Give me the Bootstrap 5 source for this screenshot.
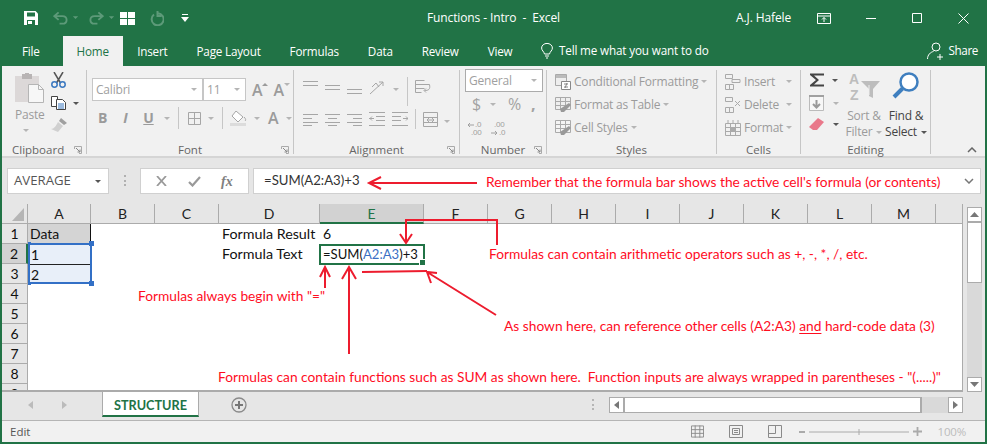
<!DOCTYPE html>
<html lang="en"><head><meta charset="utf-8"><title>Functions - Intro - Excel</title>
<link href="https://cdn.jsdelivr.net/npm/bootstrap@5.3.0/dist/css/bootstrap.min.css" rel="stylesheet">
<style>
html,body{margin:0;height:444px;overflow:hidden;background:#217346}
body{font-family:"Open Sans","Noto Sans",sans-serif;font-size:12px;color:#444}
svg{display:block;flex:none}
.xwin{position:relative;width:987px;height:444px;padding:0 2px 2px 2px;background:#217346;overflow:hidden}
.xtitle{height:36px;color:#fff;font-size:12px;margin:0 -2px}
.xqat{width:427px;padding-left:24px;flex:none}
.xcap{width:309px;white-space:pre;flex:none;letter-spacing:-.12px}
.xuser{width:81px;flex:none;letter-spacing:-.1px}
.xm35{margin-left:35px}.xm36{margin-left:36px}
.xtabs{height:30px;margin:0 -2px;color:#fff}
.xtabs .nav-link{color:#fff;padding:0;height:30px;line-height:30px;font-size:11.7px;letter-spacing:-.2px}
.xtab{padding:0 14.5px!important}
.xfile{padding:0 23px 0 22px!important}
.xhome{background:#f1f1f1;color:#217346!important;width:60px;text-align:center;padding:0!important}
.xtell{margin-left:14px;gap:6px;letter-spacing:-.15px;font-size:11.7px}
.xshare{margin-left:auto;gap:4px;padding-right:9px;font-size:11.7px;letter-spacing:-.4px}
.xribbon{height:92px;background:#f1f1f1;border-bottom:2px solid #d5d5d5;color:#9b9b9b;position:relative;font-size:12px;letter-spacing:-.2px}
.xrg{display:flex;flex-direction:column;height:84px;margin-top:4px;border-right:1px solid #c6c6c6;flex:none;position:relative}
.xrb{height:74px;flex:none}
.xlab{height:12px;flex:none;line-height:12px;text-align:center;color:#666;font-size:11.5px;position:relative;letter-spacing:0}
.xlaunch{position:absolute;right:4px;bottom:2px}
.g1{width:85px}.g2{width:207px}.g3{width:166px}.g4{width:87px}.g5{width:170px}.g6{width:84px}.g7{width:130px}
.g1 .xlab{text-align:left;padding-left:10px}
.xpaste{width:49px;padding:3px 0 0 13px;text-align:left;line-height:15px;gap:4px}
.xpaste .xcaret{margin-top:3px}
.xrow{display:flex;align-items:center}
.xcol1{padding-top:2px;gap:8px}
.xcombo{background:#fff;border:1px solid #c6c6c6;height:23px;display:flex;align-items:center;justify-content:space-between;padding:0 5px 0 3px;color:#a0a0a0;font-size:12px}
.c-font{width:111px;margin-left:5px}.c-size{width:43px}
.c-num{width:78px;height:23px;border-color:#ababab;margin:-1px 0 0 5px}
.xr2{margin-top:6px;height:22px}
.xt-a{font-size:16px;font-weight:600;color:#9b9b9b;line-height:1}
.xb{font-weight:700;font-size:14px;color:#9b9b9b;width:23px;text-align:center;line-height:1}
.xcaret{width:0;height:0;border-left:3px solid transparent;border-right:3px solid transparent;border-top:3px solid #b5b5b5;flex:none}
.xcaret.dk{border-top-color:#555}
.xcaret.xtop{align-self:flex-start;margin-top:5px}
.xcaret.xup{border-top:0;border-bottom:3px solid #9b9b9b}
.xvs{width:1px;height:22px;background:#c6c6c6;flex:none}
.xs1{margin-left:9px}.xs2{margin-left:7px}.xs3{margin-left:8px}.xs5{margin-left:5px}.xs6{margin-left:6px}.xs0{margin-left:4px}.xs16{margin-left:16px}.xs15{margin-left:15px}
.xs12{margin-left:12px}.xs10{margin-left:10px}.xs25{margin-left:25px}.xs17{margin-left:17px}
.xa-body{padding:10px 0 0 9px}
.xa-r{height:32px;flex:none;align-items:flex-start}
.xa-r svg+svg{margin-left:7px}
.xa-r .xvs{height:29px;margin-top:-3px}
.xa-r+.xa-r .xvs{height:20px;margin-top:-3px}
.xn-r{height:24px;font-size:16px;color:#a3a3a3;padding-left:12px}
.xn-r2{padding-left:8px;gap:8px}
.xs-r{height:23px;padding-left:8px;gap:3px;white-space:nowrap;font-size:12px}
.xcw{width:39px}
.xe-body{display:flex;padding:2px 0 0 8px}
.xe-col{width:30px;gap:7px}
.xe-btn{width:42px;line-height:16px;text-align:center;align-items:center;white-space:nowrap}
.xe-find{color:#444}
.xe-btn .xgap{margin-top:9px}
.xsortico{margin-bottom:-4px}
.xcollapse{position:absolute;right:8px;bottom:3px}
.xfbar{height:46px;background:#e6e6e6;margin:0;padding:10px 0 0 5px;align-items:flex-start}
.xbox{background:#fff;border:1px solid #d0d0d0;height:26px;display:flex;align-items:center}
.xname{width:102px;padding:0 7px 0 6px;justify-content:space-between;color:#555;font-size:13.2px}
.xdots{width:1px;height:11px;border-left:2px dotted #b0b0b0;margin:7px 14px 0 15px}
.xfx{width:109px;justify-content:space-around;padding:0 5px;margin-right:4px}
.xfxt{font-family:"Liberation Serif",serif;font-style:italic;font-weight:700;font-size:14px;color:#808080}
.xfi{width:728px;padding:0 6px 0 10px;font-family:Lato,"Noto Sans",sans-serif;font-size:13.2px;color:#333;justify-content:space-between}
.xmain{height:188px;background:#e6e6e6}
.xsheet{display:grid;width:961px;height:188px;flex:none;overflow:hidden;grid-template-columns:26px 63px 64px 64px 101px 104px repeat(8,64px) 27px;grid-template-rows:20px repeat(9,20px);background:#fff;font-family:Lato,"Noto Sans",sans-serif;font-size:14px;color:#111;border-right:1px solid #ababab;border-bottom:2px solid #ababab}
.xch{background:#e6e6e6;border-bottom:1px solid #ababab;border-right:1px solid #ababab;text-align:center;line-height:19px;color:#222}
.xch.ch-last{border-right:0}
.xcor{background:#e6e6e6;border-bottom:1px solid #ababab;border-right:1px solid #ababab;display:flex;align-items:flex-end;justify-content:flex-end;padding:0 3px 2px 0}
.xch.xact{background:#d2d2d2;color:#217346;border-bottom:2px solid #217346}
.xrh{background:#e6e6e6;border-bottom:1px solid #ababab;border-right:1px solid #ababab;text-align:center;line-height:19px;grid-column:1}
.xrh.xsel{background:#d2d2d2;border-right:2px solid #217346}
.xcell{padding-left:3px;line-height:20px;white-space:nowrap}
.xa1{grid-column:2;grid-row:2;background:#d4d4d4;border-right:1px solid #111;padding-left:2px}
.xrange{grid-column:2;grid-row:3/span 2;background:#e8eff9;border:2px solid #3370c6;margin:-1px -1px 0 0;position:relative;display:flex;flex-direction:column;z-index:1}
.xrange div{height:19px;padding-left:1px;line-height:19px}
.xrange div:first-child{height:20px;border-bottom:1px solid #222}
.xhandle{position:absolute;background:#3370c6;width:5px;height:5px}
.xh1{right:-4px;top:-4px}.xh2{right:-4px;bottom:-4px}.xh3{left:-2px;top:-3px;width:3px;height:3px}.xh4{left:-2px;bottom:-3px;width:3px;height:3px}
.xd1{grid-column:5;grid-row:2;font-size:14.3px}.xd2{grid-column:5;grid-row:3;font-size:14.3px}
.xe1{grid-column:6;grid-row:2}
.xe2{grid-column:6;grid-row:3;border:2px solid #217346;line-height:17px;padding-left:2px;position:relative;margin:0 -1px -1px -1px;background:#fff;z-index:1;font-size:13.1px}
.xfill{position:absolute;right:-3px;bottom:-3px;width:5px;height:5px;background:#217346;border:1px solid #fff;box-sizing:content-box}
.xblue{color:#3a6fc4}
.xvsb{width:15px;margin:3px 0 0 4px;height:185px;flex:none;display:flex;flex-direction:column}
.xsbtn{background:#fff;border:1px solid #ababab;display:flex;align-items:center;justify-content:center;flex:none}
.xvsb .xsbtn{height:15px}
.xvtrack{flex:1;background:#d9d9d9}
.xvthumb{background:#fff;border:1px solid #ababab;height:61px}
.xtabbar{height:28px;background:#e6e6e6;position:relative}
.xsheet-tab{width:97px;height:25px;background:#fff;border:solid #ababab;border-width:0 1px;border-bottom:2px solid #217346;color:#217346;font-weight:700;font-family:Lato,sans-serif;font-size:12.7px;text-align:center;line-height:26px;flex:none}
.xnav{width:100px;padding-left:26px;gap:20px;flex:none;height:25px}
.xplus{margin-left:32px;padding-top:5px}
.xsplit{margin-left:345px;height:11px;width:2px;border-left:2px dotted #b5b5b5;margin-top:7px}
.xhsb{margin-left:15px;height:16px;display:flex;width:354px;margin-top:5px}
.xhsb .xsbtn{width:15px;height:16px}
.xhtrack{width:299px;background:#fff;border:1px solid #ababab;border-width:1px 2px 1px 1px}
.xhgrey{width:26px;background:#d9d9d9}
.xstatus{height:22px;background:#f1f1f1;border-top:1px solid #b5b5b5;font-size:11.5px;color:#555;padding-left:8px}
.xsicons{margin-left:auto;padding-right:19px}
.xpct{color:#bcbcbc;font-size:11.5px;letter-spacing:-.2px}
.xov{position:absolute;left:0;top:0;z-index:5;pointer-events:none}
.xnote{position:absolute;z-index:6;color:#ff0d1f;font-family:Lato,"Noto Sans",sans-serif;font-size:13.75px;white-space:pre;line-height:18px}
.n1{left:486px;top:173px}.n2{left:489px;top:245px}.n3{left:138px;top:287px}.n4{left:504px;top:317px}.n5{left:218px;top:368px}
.xnote u{text-underline-offset:2px}
</style></head>
<body>
<svg width="0" height="0" class="position-absolute">
<defs>
<symbol id="al" viewBox="0 0 15 15"><path d="M0 1.500h15M0 5.500h15" stroke="#a6a6a6" fill="none"/></symbol>
<symbol id="am" viewBox="0 0 15 15"><path d="M0 5.500h15M0 9.500h15" stroke="#a6a6a6" fill="none"/></symbol>
<symbol id="ab" viewBox="0 0 15 15"><path d="M0 9.500h15M0 13.500h15" stroke="#a6a6a6" fill="none"/></symbol>
<symbol id="jl" viewBox="0 0 15 15"><path d="M0 2.500h15M0 6.500h9M0 10.500h15M0 13.500h9" stroke="#a6a6a6" fill="none"/></symbol>
<symbol id="jc" viewBox="0 0 15 15"><path d="M0 2.500h15M3 6.500h9M0 10.500h15M3 13.500h9" stroke="#a6a6a6" fill="none"/></symbol>
<symbol id="jr" viewBox="0 0 15 15"><path d="M0 2.500h15M6 6.500h9M0 10.500h15M6 13.500h9" stroke="#a6a6a6" fill="none"/></symbol>
<symbol id="launch" viewBox="0 0 8 8"><path d="M.5 3V.5h7v7H5" fill="none" stroke="#aaa"/><path d="M2 2l4 4M6 3.500V6H3.500" fill="none" stroke="#888"/></symbol>
</defs></svg>
<div class="xwin d-flex flex-column">

<!-- title bar -->
<div class="xtitle d-flex align-items-center">
 <div class="xqat d-flex align-items-center">
  <svg width="14" height="14" viewBox="0 0 14 14"><path d="M0 0h11.500L14 2.500V14H0z" fill="#fff"/><path d="M3 1.500h8v4H3z" fill="#217346"/><path d="M3 9h8v5H3z" fill="#217346"/><path d="M4 10h4v3H4z" fill="#fff"/></svg>
  <svg class="xs15" width="15" height="14" viewBox="0 0 16 14"><path d="M6 1L1.500 5 6 9M2 5h8c6 0 6 8 0 8H7" fill="none" stroke="#5d9a79" stroke-width="2"/></svg>
  <svg class="xs0" width="7" height="4" viewBox="0 0 8 4"><path d="M1 0h6L4 3z" fill="#5d9a79"/></svg>
  <svg class="xs10" width="15" height="14" viewBox="0 0 16 14"><path d="M10 1l4.500 4L10 9M14 5H6c-6 0-6 8 0 8h3" fill="none" stroke="#5d9a79" stroke-width="2"/></svg>
  <svg class="xs0" width="7" height="4" viewBox="0 0 8 4"><path d="M1 0h6L4 3z" fill="#5d9a79"/></svg>
  <svg class="xs5" width="15" height="13" viewBox="0 0 15 13"><path d="M0 0h7v6H0zM8 0h7v6H8zM0 7h7v6H0zM8 7h7v6H8z" fill="#fff"/></svg>
  <svg class="xs15" width="14" height="15" viewBox="0 0 14 15"><path d="M4 3.500a6 6 0 1 0 4-1.200M7.500 0v5h4" fill="none" stroke="#5d9a79" stroke-width="2"/></svg>
  <svg class="xs17" width="8" height="8" viewBox="0 0 8 8"><path d="M1 0h6v1H1zM0 3h8L4 8z" fill="#fff"/></svg>
 </div>
 <div class="xcap">Functions - Intro  -  Excel</div>
 <div class="xuser">A.J. Hafele</div>
 <svg width="14" height="11" viewBox="0 0 14 11"><path d="M.5.500h13v10H.5zM0 3h14M7 9V4.500M5 6.500l2-2 2 2" fill="none" stroke="#fff"/></svg>
 <svg class="xm35" width="10" height="1" viewBox="0 0 10 1"><path d="M0 .500h10" stroke="#fff"/></svg>
 <svg class="xm36" width="10" height="10" viewBox="0 0 10 10"><path d="M.5.500h9v9h-9z" fill="none" stroke="#fff"/></svg>
 <svg class="xm36" width="11" height="11" viewBox="0 0 11 11"><path d="M.5.500l10 10M10.500.500l-10 10" stroke="#fff"/></svg>
</div>

<!-- tabs -->
<ul class="nav xtabs flex-nowrap">
 <li class="nav-item"><a class="nav-link xfile" href="#">File</a></li>
 <li class="nav-item"><a class="nav-link xhome" href="#">Home</a></li>
 <li class="nav-item"><a class="nav-link xtab" href="#">Insert</a></li>
 <li class="nav-item"><a class="nav-link xtab" href="#">Page Layout</a></li>
 <li class="nav-item"><a class="nav-link xtab" href="#">Formulas</a></li>
 <li class="nav-item"><a class="nav-link xtab" href="#">Data</a></li>
 <li class="nav-item"><a class="nav-link xtab" href="#">Review</a></li>
 <li class="nav-item"><a class="nav-link xtab" href="#">View</a></li>
 <li class="nav-item d-flex align-items-center xtell">
  <svg width="12" height="16" viewBox="0 0 12 16"><path d="M3.500 11C3 8.500.6 7.500.6 5a5.400 4.600 0 0 1 10.800 0c0 2.500-2.400 3.500-2.900 6zM4 13h4M5 15h2" fill="none" stroke="#fff"/></svg>
  <span>Tell me what you want to do</span></li>
 <li class="nav-item d-flex align-items-center xshare">
  <svg width="18" height="18" viewBox="0 0 18 18"><circle cx="9" cy="5" r="4" fill="none" stroke="#fff"/><path d="M.5 17c0-4 3-7 6-7.500M13 12v6M10 15h6" fill="none" stroke="#fff"/></svg>
  <span>Share</span></li>
</ul>

<!-- ribbon -->
<div class="xribbon d-flex">
 <div class="xrg g1">
  <div class="xrb d-flex">
   <div class="xpaste d-flex flex-column">
    <svg width="30" height="30" viewBox="0 0 30 30"><path d="M0 3h24v26H0z" fill="#dcd8d8"/><path d="M7 1h10v5H7z" fill="#b8b4b4"/><path d="M10 0h4v2h-4z" fill="#b8b4b4"/><path d="M13.500 11.500h10l5 5v13h-15z" fill="#f7f7f7" stroke="#b5b5b5"/><path d="M23.500 11.500v5h5" fill="none" stroke="#b5b5b5"/></svg>
    <span>Paste</span>
    <span class="xcaret ms-2"></span>
   </div>
   <div class="d-flex flex-column xcol1">
    <svg width="15" height="16" viewBox="0 0 15 16"><path d="M3 0l6.500 11M12 0L5.500 11" stroke="#555" stroke-width="1.500" fill="none"/><circle cx="3.500" cy="12.500" r="2.700" fill="none" stroke="#3a78c0" stroke-width="1.500"/><circle cx="11.500" cy="12.500" r="2.700" fill="none" stroke="#3a78c0" stroke-width="1.500"/></svg>
    <div class="xrow"><svg width="15" height="14" viewBox="0 0 15 14"><path d="M.5.500h6v10h-6z" fill="#fff" stroke="#444"/><path d="M5.500 3.500h6l3 3v7h-9z" fill="#fff" stroke="#444"/><path d="M7 8h6M7 10h6M7 12h6" stroke="#3a78c0"/></svg><span class="xcaret dk xs2"></span></div>
    <svg width="16" height="15" viewBox="0 0 16 15"><path d="M10 0l6 5-3 2-5-4z" fill="#a0a0a0"/><path d="M7 4l5 4-5 6-7-3c3 0 5-3 7-7z" fill="#d0d0d0"/></svg>
   </div>
  </div>
  <div class="xlab">Clipboard<svg class="xlaunch" width="8" height="8"><use href="#launch"/></svg></div>
 </div>

 <div class="xrg g2">
  <div class="xrb">
   <div class="xrow mt-1 pt-1">
    <div class="xcombo c-font"><span>Calibri</span><span class="xcaret"></span></div>
    <div class="xcombo c-size"><span>11</span><span class="xcaret"></span></div>
    <span class="xt-a xs6">A</span><span class="xcaret xup xtop"></span>
    <span class="xt-a xs5">A</span><span class="xcaret xtop"></span>
   </div>
   <div class="xrow xr2">
    <span class="xb xs0">B</span><span class="xb fst-italic">I</span><span class="xb text-decoration-underline">U</span>
    <span class="xcaret xs0"></span><span class="xvs xs3"></span>
    <svg class="xs1" width="13" height="13" viewBox="0 0 13 13"><path d="M.5.500h12v12H.5zM6.500 0v13M0 6.500h13" fill="none" stroke="#a6a6a6"/></svg>
    <span class="xcaret xs2"></span><span class="xvs xs3"></span>
    <svg class="xs2" width="17" height="15" viewBox="0 0 17 15"><path d="M6 0l7 6-5 5-6-6z" fill="#fff" stroke="#a6a6a6"/><path d="M14 6c2 2 2 3 1 4" stroke="#a6a6a6" fill="none"/><path d="M0 12h16v3H0z" fill="#dcdcdc"/></svg>
    <span class="xcaret xs2"></span>
    <span class="xt-a xs3">A</span><span class="xcaret xs3"></span>
   </div>
  </div>
  <div class="xlab">Font<svg class="xlaunch" width="8" height="8"><use href="#launch"/></svg></div>
 </div>

 <div class="xrg g3">
  <div class="xrb xa-body d-flex flex-column">
   <div class="xrow xa-r">
    <svg width="15" height="15"><use href="#al"/></svg><svg width="15" height="15"><use href="#am"/></svg><svg width="15" height="15"><use href="#ab"/></svg>
    <svg class="xs1" width="17" height="15" viewBox="0 0 17 15"><path d="M1 14L14 2M14 2h-4M14 2v4" fill="none" stroke="#a6a6a6"/><path d="M3 7l4-4 3 4" fill="none" stroke="#a6a6a6"/></svg>
    <span class="xcaret xs2 mt-2"></span>
    <span class="xvs xs3"></span>
    <svg class="xs2" width="16" height="16" viewBox="0 0 16 16"><path d="M.5.500h9M.5 4.500h14M.5 8.500h9M.5 12.500h6M.5.500v12" fill="none" stroke="#a6a6a6"/><path d="M14.500 4.500c1 5-1 6-5 6M11 8.500l-2 2 2 2" fill="none" stroke="#a6a6a6"/></svg>
   </div>
   <div class="xrow xa-r">
    <svg width="15" height="15"><use href="#jl"/></svg><svg width="15" height="15"><use href="#jc"/></svg><svg width="15" height="15"><use href="#jr"/></svg>
    <svg class="xs1" width="16" height="15" viewBox="0 0 16 15"><path d="M0 .500h16M7 4.500h9M7 8.500h9M0 13.500h16M5 6.500H0M3 4.500l-2 2 2 2" fill="none" stroke="#a6a6a6"/></svg>
    <svg class="xs5" width="16" height="15" viewBox="0 0 16 15"><path d="M0 .500h16M0 4.500h9M0 8.500h9M0 13.500h16M11 6.500h5M14 4.500l2 2-2 2" fill="none" stroke="#a6a6a6"/></svg>
    <span class="xvs xs2"></span>
    <svg class="xs2" width="15" height="15" viewBox="0 0 15 15"><path d="M.5.500h14v14H.5zM0 5.500h15M0 10.500h15M4 8h7M6 6l-2 2 2 2M9 6l2 2-2 2" fill="none" stroke="#a6a6a6"/></svg>
    <span class="xcaret xs6 mt-2"></span>
   </div>
  </div>
  <div class="xlab">Alignment<svg class="xlaunch" width="8" height="8"><use href="#launch"/></svg></div>
 </div>

 <div class="xrg g4">
  <div class="xrb">
   <div class="xcombo c-num"><span>General</span><span class="xcaret"></span></div>
   <div class="xrow xn-r"><span>$</span><span class="xcaret xs1"></span><span class="xs12">%</span><span class="xs10 fw-bold">,</span></div>
   <div class="xrow xn-r xn-r2">
    <svg width="15" height="15" viewBox="0 0 15 15"><text x="7" y="6" font-size="8" fill="#a0a0a0" font-family="Liberation Sans">.0</text><text x="3" y="14" font-size="8" fill="#a0a0a0" font-family="Liberation Sans">.00</text><path d="M0 4h6M2 2L0 4l2 2" fill="none" stroke="#a0a0a0"/></svg>
    <svg width="15" height="15" viewBox="0 0 15 15"><text x="3" y="6" font-size="8" fill="#a0a0a0" font-family="Liberation Sans">.00</text><text x="8" y="14" font-size="8" fill="#a0a0a0" font-family="Liberation Sans">.0</text><path d="M0 12h6M4 10l2 2-2 2" fill="none" stroke="#a0a0a0"/></svg>
   </div>
  </div>
  <div class="xlab">Number<svg class="xlaunch" width="8" height="8"><use href="#launch"/></svg></div>
 </div>

 <div class="xrg g5">
  <div class="xrb">
   <div class="xrow xs-r"><svg width="16" height="16" viewBox="0 0 16 16"><path d="M.5.500h11v11H.5z" fill="#eee" stroke="#aaa"/><path d="M1 1h10v3H1z" fill="#bbb"/><path d="M6.500 7.500h9v8h-9z" fill="#fff" stroke="#888"/><path d="M9 10h4M9 13h4M12 9l-2 5" stroke="#888"/></svg><span>Conditional Formatting</span><span class="xcaret"></span></div>
   <div class="xrow xs-r"><svg width="16" height="16" viewBox="0 0 16 16"><path d="M.5.500h15v12H.5zM0 4.500h16M5.500 0v13M10.500 0v13M0 8.500h16" fill="#eee" stroke="#aaa"/><path d="M14 6l2 2-7 7H6l-1-3z" fill="#999"/></svg><span>Format as Table</span><span class="xcaret"></span></div>
   <div class="xrow xs-r"><svg width="16" height="16" viewBox="0 0 16 16"><path d="M.5.500h15v12H.5zM0 4.500h16M5.500 0v13M10.500 0v13M0 8.500h16" fill="#f4f4f4" stroke="#aaa"/><path d="M14 6l2 2-7 7H6l-1-3z" fill="#999"/></svg><span>Cell Styles</span><span class="xcaret"></span></div>
  </div>
  <div class="xlab">Styles</div>
 </div>

 <div class="xrg g6">
  <div class="xrb">
   <div class="xrow xs-r"><svg width="16" height="16" viewBox="0 0 16 16"><path d="M.5.500h7v4h-7zM.5 10.500h4v5h-4zM4.500 10.500h4v5h-4zM7 5.500h8v3H7z" fill="none" stroke="#aaa"/></svg><span class="xcw">Insert</span><span class="xcaret"></span></div>
   <div class="xrow xs-r"><svg width="16" height="16" viewBox="0 0 16 16"><path d="M.5.500h7v4h-7zM.5 10.500h4v5h-4zM4.500 10.500h4v5h-4zM10 4l5 5M15 4l-5 5" fill="none" stroke="#aaa"/></svg><span class="xcw">Delete</span><span class="xcaret"></span></div>
   <div class="xrow xs-r"><svg width="16" height="16" viewBox="0 0 16 16"><path d="M.5 3.500h15v12H.5zM0 7.500h16M0 11.500h16M5.500 3v13M10.500 3v13M3 0v3M8 0v3M13 0v3" fill="none" stroke="#aaa"/><path d="M6 8h4v3H6z" fill="#aaa"/></svg><span class="xcw">Format</span><span class="xcaret"></span></div>
  </div>
  <div class="xlab">Cells</div>
 </div>

 <div class="xrg g7">
  <div class="xrb xe-body">
   <div class="xe-col d-flex flex-column">
    <div class="xrow"><svg width="16" height="16" viewBox="0 0 16 16"><path d="M1 1.500h14v2H5l5 4.500-5 4.500h10v2H1v-1.500L7 8 1 3z" fill="#444"/></svg><span class="xcaret dk xs2"></span></div>
    <div class="xrow"><svg width="15" height="16" viewBox="0 0 15 16"><path d="M.5.500h14v15H.5z" fill="#f7f7f7" stroke="#bbb"/><path d="M0 0h15v2H0z" fill="#a0a0a0"/><path d="M7.500 5v7M4 9l3.500 3.500L11 9" fill="none" stroke="#999" stroke-width="2"/></svg><span class="xcaret xs1"></span></div>
    <div class="xrow"><svg width="15" height="13" viewBox="0 0 15 13"><path d="M9 0l6 4-7 8H4l-4-3z" fill="#e9788a"/></svg><span class="xcaret dk xs1"></span></div>
   </div>
   <div class="xe-btn d-flex flex-column xs0">
    <svg class="xsortico" width="31" height="31" viewBox="0 0 31 31"><text x="0" y="12" font-size="14" font-weight="700" fill="#bdbdbd" font-family="Liberation Sans">A</text><text x="1" y="28" font-size="14" font-weight="700" fill="#bdbdbd" font-family="Liberation Sans">Z</text><path d="M12 9h19l-7 8v9l-4-2v-7z" fill="#bdbdbd"/><path d="M20 13v10" stroke="#eee"/></svg>
    <span class="xgap">Sort &amp;</span>
    <span class="d-flex align-items-center gap-1">Filter<span class="xcaret"></span></span>
   </div>
   <div class="xe-btn xe-find d-flex flex-column">
    <svg width="28" height="27" viewBox="0 0 28 27"><circle cx="17" cy="10" r="8.500" fill="#fff" stroke="#3f7fbf" stroke-width="2.500"/><path d="M10.500 16.500L2 25" stroke="#3f7fbf" stroke-width="4"/></svg>
    <span class="xgap">Find &amp;</span>
    <span class="d-flex align-items-center gap-1">Select<span class="xcaret dk"></span></span>
   </div>
  </div>
  <div class="xlab">Editing</div>
 </div>
 <svg class="xcollapse" width="10" height="6" viewBox="0 0 10 6"><path d="M1 5l4-4 4 4" fill="none" stroke="#666" stroke-width="1.500"/></svg>
</div>

<!-- formula bar -->
<div class="xfbar d-flex">
 <div class="xbox xname"><span>AVERAGE</span><span class="xcaret dk"></span></div>
 <div class="xdots"></div>
 <div class="xbox xfx">
  <svg width="11" height="10" viewBox="0 0 11 10"><path d="M1 0l9 10M10 0L1 10" stroke="#999" stroke-width="1.800"/></svg>
  <svg width="13" height="11" viewBox="0 0 13 11"><path d="M1 6l3.500 3.500L12 1" stroke="#999" stroke-width="2.200" fill="none"/></svg>
  <span class="xfxt">fx</span>
 </div>
 <div class="xbox xfi"><span>=SUM(A2:A3)+3</span><svg width="10" height="6" viewBox="0 0 10 6"><path d="M1 1l4 4 4-4" fill="none" stroke="#777" stroke-width="1.500"/></svg></div>
</div>

<!-- sheet -->
<div class="xmain d-flex">
 <div class="xsheet">
  <div class="xcor"><svg width="12" height="13" viewBox="0 0 12 13"><path d="M12 0v13H0z" fill="#b5b5b5"/></svg></div>
  <div class="xch">A</div><div class="xch">B</div><div class="xch">C</div><div class="xch">D</div><div class="xch xact">E</div><div class="xch">F</div><div class="xch">G</div><div class="xch">H</div><div class="xch">I</div><div class="xch">J</div><div class="xch">K</div><div class="xch">L</div><div class="xch">M</div><div class="xch ch-last"></div>
  <div class="xrh">1</div><div class="xrh xsel">2</div><div class="xrh">3</div><div class="xrh">4</div><div class="xrh">5</div><div class="xrh">6</div><div class="xrh">7</div><div class="xrh">8</div><div class="xrh">9</div>
  <div class="xcell xa1">Data</div>
  <div class="xrange"><div>1</div><div>2</div><span class="xhandle xh1"></span><span class="xhandle xh2"></span><span class="xhandle xh3"></span><span class="xhandle xh4"></span></div>
  <div class="xcell xd1">Formula Result</div>
  <div class="xcell xd2">Formula Text</div>
  <div class="xcell xe1">6</div>
  <div class="xcell xe2">=SUM(<span class="xblue">A2:A3</span>)+3<span class="xfill"></span></div>
 </div>
 <div class="xvsb">
  <div class="xsbtn"><svg width="9" height="5" viewBox="0 0 9 5"><path d="M4.500 0L9 5H0z" fill="#777"/></svg></div>
  <div class="xvtrack"><div class="xvthumb"></div></div>
  <div class="xsbtn"><svg width="9" height="5" viewBox="0 0 9 5"><path d="M0 0h9L4.500 5z" fill="#777"/></svg></div>
 </div>
</div>

<!-- sheet tabs -->
<div class="xtabbar d-flex align-items-start">
 <div class="xnav d-flex align-items-center">
  <svg width="5" height="8" viewBox="0 0 5 8"><path d="M5 0v8L0 4z" fill="#bbb"/></svg>
  <svg class="xs1" width="5" height="8" viewBox="0 0 5 8"><path d="M0 0v8l5-4z" fill="#bbb"/></svg>
 </div>
 <div class="xsheet-tab">STRUCTURE</div>
 <div class="xplus"><svg width="16" height="16" viewBox="0 0 16 16"><circle cx="8" cy="8" r="7" fill="none" stroke="#8a8a8a" stroke-width="1.300"/><path d="M8 4v8M4 8h8" stroke="#777" stroke-width="2"/></svg></div>
 <div class="xsplit"></div>
 <div class="xhsb">
  <div class="xsbtn"><svg width="5" height="8" viewBox="0 0 5 8"><path d="M5 0v8L0 4z" fill="#777"/></svg></div>
  <div class="xhtrack"></div><div class="xhgrey"></div>
  <div class="xsbtn"><svg width="5" height="8" viewBox="0 0 5 8"><path d="M0 0v8l5-4z" fill="#777"/></svg></div>
 </div>
</div>

<!-- status bar -->
<div class="xstatus d-flex align-items-center">
 <span>Edit</span>
 <div class="xsicons d-flex align-items-center">
  <svg width="13" height="13" viewBox="0 0 14 13"><path d="M.5.500h13v12H.5zM0 4.500h14M0 8.500h14M4.500 0v13M9.500 0v13" fill="none" stroke="#8a8a8a"/></svg>
  <svg class="xs25" width="14" height="13" viewBox="0 0 14 13"><path d="M.5.500h13v12H.5zM3.500 3.500h7v6h-7zM5 5.500h4M5 7.500h4" fill="none" stroke="#8a8a8a"/></svg>
  <svg class="xs25" width="14" height="13" viewBox="0 0 14 13"><path d="M.5.500h13v12H.5zM.5 8.500h7v-8" fill="none" stroke="#8a8a8a"/></svg>
  <svg class="xs17" width="110" height="10" viewBox="0 0 110 10"><path d="M0 5h6" stroke="#aaa" stroke-width="2"/><path d="M10 5h100M60 2v6" stroke="#aaa"/></svg>
  <svg class="xs0" width="9" height="9" viewBox="0 0 10 10"><path d="M0 5h10M5 0v10" stroke="#aaa" stroke-width="2"/></svg>
  <span class="xpct xs16">100%</span>
 </div>
</div>

<!-- annotations -->
<div class="xnote n1">Remember that the formula bar shows the active cell's formula (or contents)</div>
<div class="xnote n2">Formulas can contain arithmetic operators such as +, -, *, /, etc.</div>
<div class="xnote n3">Formulas always begin with "="</div>
<div class="xnote n4">As shown here, can reference other cells (A2:A3) <u>and</u> hard-code data (3)</div>
<div class="xnote n5">Formulas can contain functions such as SUM as shown here.  Function inputs are always wrapped in parentheses - "(.....)"</div>
<svg class="xov" width="987" height="444" viewBox="0 0 987 444" fill="none" stroke="#ed1c2e" stroke-width="2">
 <path d="M477 183H369M381 177l-12 6 12 6"/>
 <path d="M497 245V220H406V243M400 234l6 9 6-9"/>
 <path d="M325 288V267M320 277l5-10 5 10"/>
 <path d="M349 354V267M342 279l7-12 7 12"/>
 <path d="M362 272l65-1"/>
 <path d="M496 315L427 272M437 273l-10-1 4 11"/>
</svg>
</div>
</body></html>
